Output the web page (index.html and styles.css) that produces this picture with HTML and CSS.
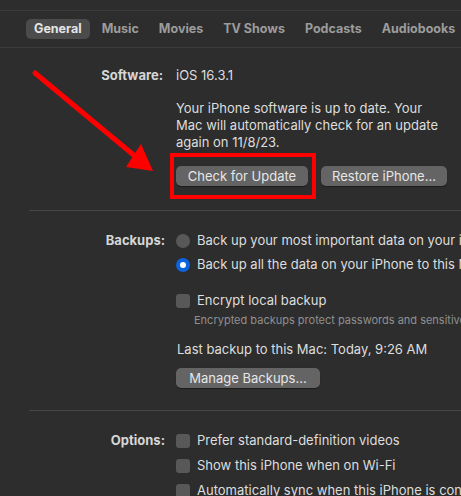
FILE: index.html
```html
<!DOCTYPE html>
<html>
<head>
<meta charset="utf-8">
<link rel="stylesheet" href="styles.css">
</head>
<body>
<div class="page">
  <nav class="tabbar">
    <span class="tab active">General</span>
    <span class="tab">Music</span>
    <span class="tab">Movies</span>
    <span class="tab">TV Shows</span>
    <span class="tab">Podcasts</span>
    <span class="tab">Audiobooks</span>
  </nav>

  <section class="section software">
    <div class="label">Software:</div>
    <div class="body">
      <div class="line">iOS 16.3.1</div>
      <p class="para">Your iPhone software is up to date. Your Mac will automatically check for an update again on 11/8/23.</p>
      <div class="buttons">
        <span class="btn-wrap">
          <button class="btn">Check for Update</button>
          <span class="highlight"></span>
        </span>
        <button class="btn">Restore iPhone...</button>
      </div>
    </div>
  </section>

  <section class="section backups">
    <div class="label">Backups:</div>
    <div class="body">
      <div class="opt radio-row"><span class="radio"></span><span class="nowrap">Back up your most important data on your iPhone to iCloud</span></div>
      <div class="opt radio-row second"><span class="radio on"></span><span class="nowrap">Back up all the data on your iPhone to this Mac</span></div>
      <div class="opt check-row"><span class="check"></span><span>Encrypt local backup</span></div>
      <div class="hint nowrap">Encrypted backups protect passwords and sensitive personal data.</div>
      <div class="line last">Last backup to this Mac: Today, 9:26 AM</div>
      <button class="btn manage">Manage Backups...</button>
    </div>
  </section>

  <section class="section options">
    <div class="label">Options:</div>
    <div class="body">
      <div class="opt opt-row"><span class="check"></span><span class="nowrap">Prefer standard-definition videos</span></div>
      <div class="opt opt-row"><span class="check"></span><span class="nowrap">Show this iPhone when on Wi-Fi</span></div>
      <div class="opt opt-row"><span class="check"></span><span class="nowrap">Automatically sync when this iPhone is connected</span></div>
    </div>
  </section>

  <svg class="arrow" width="461" height="496" viewBox="0 0 461 496">
    <line x1="35" y1="73" x2="136" y2="157" stroke="#ff0000" stroke-width="5" stroke-linecap="round"/>
    <polygon points="126,167 141,144 153,171" fill="#ff0000"/>
  </svg>
</div>
</body>
</html>
```

FILE: styles.css
```css
html, body {
  margin: 0;
  padding: 0;
  background: #2d2d2d;
  overflow: hidden;
}
.page {
  position: relative;
  width: 461px;
  height: 496px;
  overflow: hidden;
  font-family: Inter, "Liberation Sans", sans-serif;
  font-size: 13px;
  color: #dedede;
  padding-top: 10px;
  box-sizing: border-box;
}
.tabbar {
  display: flex;
  gap: 4px;
  align-items: center;
  height: 36px;
  padding-left: 26px;
  border-top: 1px solid #3b3b3b;
  border-bottom: 1px solid #3b3b3b;
  white-space: nowrap;
}
.tab {
  font-weight: 700;
  font-size: 12.5px;
  color: #9c9c9c;
  padding: 2px 8px;
  height: 16px;
  line-height: 16px;
  border-radius: 5px;
}
.tab.active {
  background: #4b4b4b;
  color: #e4e4e4;
}
.section {
  display: grid;
  grid-template-columns: 165px 1fr;
  column-gap: 11px;
  line-height: 17px;
}
.label {
  text-align: right;
  font-weight: 700;
  color: #d6d6d6;
}
.software .label {
  padding-right: 2px;
}
.body {
  min-width: 0;
  white-space: nowrap;
}
.nowrap { white-space: nowrap; }
.software {
  padding-top: 19px;
  padding-bottom: 24px;
}
.para {
  margin: 16px 0 0;
  width: 270px;
  white-space: normal;
}
.buttons {
  display: flex;
  gap: 13px;
  margin-top: 15px;
}
.btn-wrap {
  position: relative;
  display: inline-flex;
}
.btn {
  font-family: inherit;
  font-size: 13px;
  color: #e6e6e6;
  background: #646464;
  border: none;
  border-radius: 5px;
  height: 20px;
  line-height: 20px;
  padding: 0;
  width: 132px;
  box-shadow: 0 0.5px 1px rgba(0,0,0,0.4);
}
.buttons > .btn {
  width: 126px;
}
.highlight {
  position: absolute;
  left: -6px;
  top: -13px;
  width: 146px;
  height: 46px;
  border: 4px solid #ff0000;
  box-sizing: border-box;
}
.backups {
  border-top: 1px solid #454545;
  margin-left: 29px;
  grid-template-columns: 136px 1fr;
  padding-top: 21px;
  padding-bottom: 22px;
  border-bottom: 1px solid #454545;
}
.opt {
  display: flex;
  align-items: center;
  gap: 7px;
  height: 17px;
}
.radio-row.second {
  margin-top: 7px;
}
.check-row {
  margin-top: 19px;
}
.radio {
  width: 14px;
  height: 14px;
  border-radius: 50%;
  background: #585858;
  flex: none;
  box-sizing: border-box;
}
.radio.on {
  background: #0c63de;
  position: relative;
}
.radio.on::after {
  content: "";
  position: absolute;
  left: 4px;
  top: 4px;
  width: 6px;
  height: 6px;
  border-radius: 50%;
  background: #ffffff;
}
.check {
  width: 14px;
  height: 14px;
  border-radius: 3px;
  background: #585858;
  flex: none;
}
.hint {
  font-size: 11px;
  color: #909090;
  margin-top: 4px;
  padding-left: 18px;
  line-height: 14px;
}
.last {
  margin-top: 14px;
  padding-left: 1px;
}
.manage {
  margin-top: 10px;
  width: 144px;
}
.options {
  padding-top: 21px;
}
.opt-row + .opt-row {
  margin-top: 8px;
}
.arrow {
  position: absolute;
  left: 0;
  top: 0;
  pointer-events: none;
}
```
